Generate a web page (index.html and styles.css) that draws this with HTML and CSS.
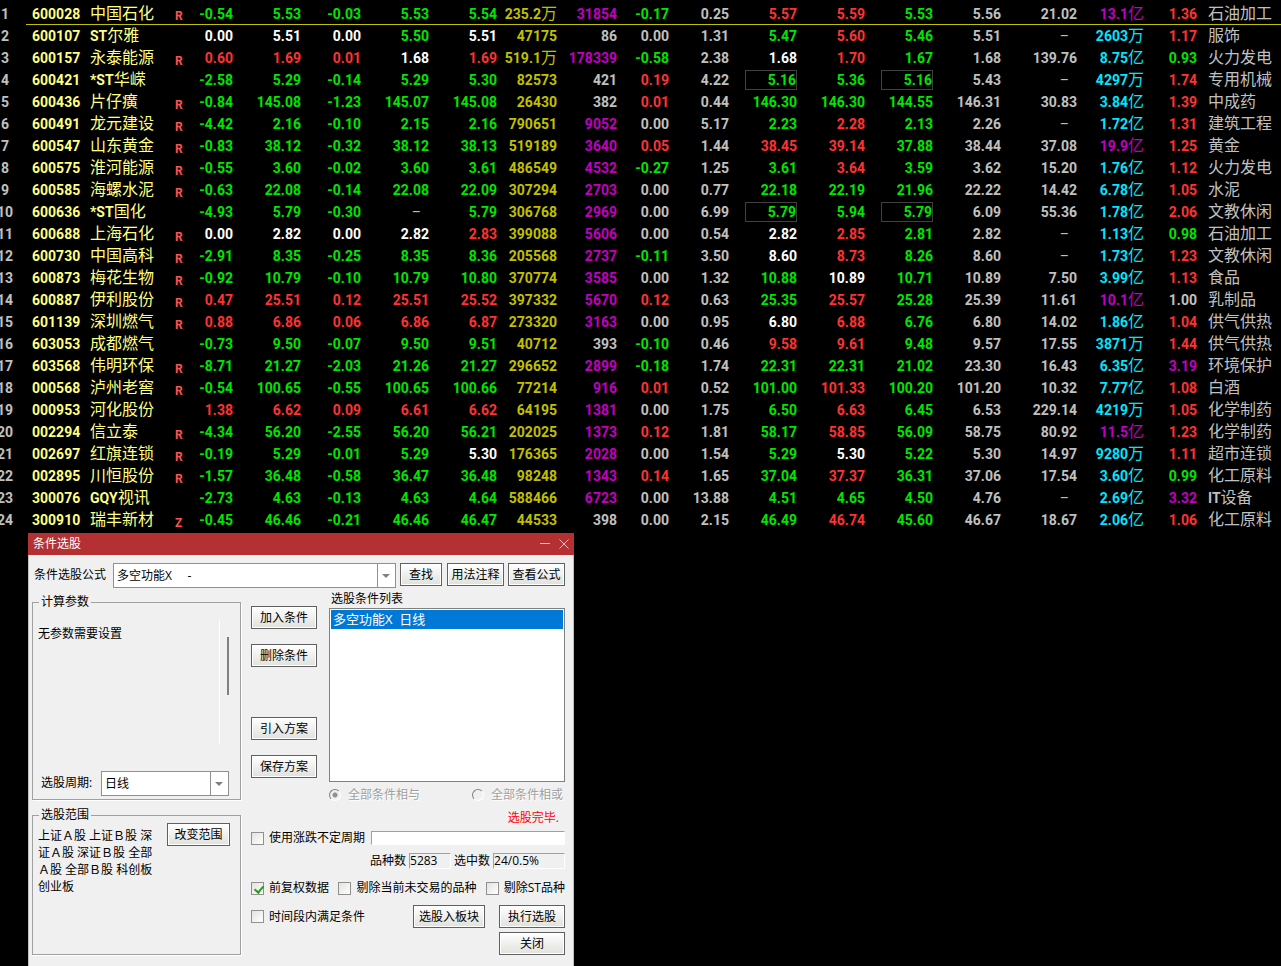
FILE: index.html
```html
<!DOCTYPE html>
<html lang="zh-CN">
<head>
    <meta charset="UTF-8">
    <meta name="viewport" content="width=device-width, initial-scale=1.0">
    <title>条件选股</title>
    <link rel="stylesheet" href="styles.css">
</head>
<body>

<!-- 行情列表 -->
<table class="quotes">
    <colgroup>
        <col class="c-index"><col class="c-code"><col class="c-name"><col class="c-flag">
        <col class="c-pct"><col class="c-price"><col class="c-mid"><col class="c-price"><col class="c-price">
        <col class="c-mid"><col class="c-mid"><col class="c-speed"><col class="c-mid">
        <col class="c-price"><col class="c-price"><col class="c-price"><col class="c-price">
        <col class="c-pe"><col class="c-amount"><col class="c-ratio"><col>
    </colgroup>
    <tbody id="quote-body"></tbody>
</table>

<!-- 条件选股窗口 -->
<div class="dialog">
    <div class="title-bar">
        <span>条件选股</span>
        <div class="title-buttons">
            <button type="button" aria-label="最小化"><svg width="10" height="10" viewBox="0 0 10 10"><path d="M0 4.5H10"/></svg></button>
            <button type="button" aria-label="关闭窗口"><svg width="10" height="10" viewBox="0 0 10 10"><path d="M0.5 0.5L9.5 9.5M9.5 0.5L0.5 9.5"/></svg></button>
        </div>
    </div>

    <form class="dialog-body">
        <div class="formula-row">
            <label for="formula">条件选股公式</label>
            <div class="combo formula-combo">
                <select id="formula"><option>多空功能X &nbsp; &nbsp; -</option></select>
            </div>
            <button type="button" class="btn btn-find">查找</button>
            <button type="button" class="btn btn-usage">用法注释</button>
            <button type="button" class="btn btn-view">查看公式</button>
        </div>

        <div class="main">
            <div class="left">
                <fieldset class="params">
                    <legend>计算参数</legend>
                    <div class="params-pane">
                        <p>无参数需要设置</p>
                        <div class="scroll-thumb"></div>
                    </div>
                    <div class="period-row">
                        <label for="period">选股周期:</label>
                        <div class="combo">
                            <select id="period"><option>日线</option></select>
                        </div>
                    </div>
                </fieldset>

                <fieldset class="range">
                    <legend>选股范围</legend>
                    <div class="range-row">
                        <p>上证Ａ股 上证Ｂ股 深<br>证Ａ股 深证Ｂ股 全部<br>Ａ股 全部Ｂ股 科创板<br>创业板</p>
                        <button type="button" class="btn">改变范围</button>
                    </div>
                </fieldset>
            </div>

            <div class="right">
                <div class="conditions">
                    <div class="condition-buttons">
                        <button type="button" class="btn">加入条件</button>
                        <button type="button" class="btn">删除条件</button>
                        <button type="button" class="btn plan-first">引入方案</button>
                        <button type="button" class="btn">保存方案</button>
                    </div>
                    <div class="condition-list">
                        <div class="list-label" id="list-label">选股条件列表</div>
                        <ul class="listbox" role="listbox" aria-labelledby="list-label">
                            <li role="option" aria-selected="true">多空功能X &nbsp;日线</li>
                        </ul>
                        <div class="logic-row">
                            <label><input type="radio" name="logic" checked disabled>全部条件相与</label>
                            <label><input type="radio" name="logic" disabled>全部条件相或</label>
                        </div>
                    </div>
                </div>

                <div class="status">选股完毕.</div>

                <div class="cycle-row">
                    <label><input type="checkbox">使用涨跌不定周期</label>
                    <input type="text" class="cycle-input" aria-label="不定周期">
                </div>

                <div class="count-row">
                    <label for="total">品种数</label>
                    <input type="text" id="total" class="total" value="5283" readonly>
                    <label for="hits">选中数</label>
                    <input type="text" id="hits" class="hits" value="24/0.5%" readonly>
                </div>

                <div class="check-row">
                    <label><input type="checkbox" checked>前复权数据</label>
                    <label><input type="checkbox">剔除当前未交易的品种</label>
                    <label><input type="checkbox">剔除ST品种</label>
                </div>

                <div class="action-row">
                    <label><input type="checkbox">时间段内满足条件</label>
                    <button type="button" class="btn btn-board">选股入板块</button>
                    <button type="button" class="btn btn-run">执行选股</button>
                </div>
                <div class="close-row">
                    <button type="button" class="btn btn-run">关闭</button>
                </div>
            </div>
        </div>
    </form>
</div>

<script>
    // 代码 名称 标记 涨幅 现价 涨跌 买价 卖价 总量 现量 涨速 换手 今开 最高 最低 昨收 市盈 金额 量比 行业
    const quotes = `
600028 中国石化 R -0.54 5.53 -0.03 5.53 5.54 235.2万 31854 -0.17 0.25 5.57 5.59 5.53 5.56 21.02 13.1亿 1.36 石油加工
600107 ST尔雅 . 0.00 5.51 0.00 5.50 5.51 47175 86 0.00 1.31 5.47 5.60 5.46 5.51 – 2603万 1.17 服饰
600157 永泰能源 R 0.60 1.69 0.01 1.68 1.69 519.1万 178339 -0.58 2.38 1.68 1.70 1.67 1.68 139.76 8.75亿 0.93 火力发电
600421 *ST华嵘 . -2.58 5.29 -0.14 5.29 5.30 82573 421 0.19 4.22 5.16 5.36 5.16 5.43 – 4297万 1.74 专用机械
600436 片仔癀 R -0.84 145.08 -1.23 145.07 145.08 26430 382 0.01 0.44 146.30 146.30 144.55 146.31 30.83 3.84亿 1.39 中成药
600491 龙元建设 R -4.42 2.16 -0.10 2.15 2.16 790651 9052 0.00 5.17 2.23 2.28 2.13 2.26 – 1.72亿 1.31 建筑工程
600547 山东黄金 R -0.83 38.12 -0.32 38.12 38.13 519189 3640 0.05 1.44 38.45 39.14 37.88 38.44 37.08 19.9亿 1.25 黄金
600575 淮河能源 R -0.55 3.60 -0.02 3.60 3.61 486549 4532 -0.27 1.25 3.61 3.64 3.59 3.62 15.20 1.76亿 1.12 火力发电
600585 海螺水泥 R -0.63 22.08 -0.14 22.08 22.09 307294 2703 0.00 0.77 22.18 22.19 21.96 22.22 14.42 6.78亿 1.05 水泥
600636 *ST国化 . -4.93 5.79 -0.30 – 5.79 306768 2969 0.00 6.99 5.79 5.94 5.79 6.09 55.36 1.78亿 2.06 文教休闲
600688 上海石化 R 0.00 2.82 0.00 2.82 2.83 399088 5606 0.00 0.54 2.82 2.85 2.81 2.82 – 1.13亿 0.98 石油加工
600730 中国高科 R -2.91 8.35 -0.25 8.35 8.36 205568 2737 -0.11 3.50 8.60 8.73 8.26 8.60 – 1.73亿 1.23 文教休闲
600873 梅花生物 R -0.92 10.79 -0.10 10.79 10.80 370774 3585 0.00 1.32 10.88 10.89 10.71 10.89 7.50 3.99亿 1.13 食品
600887 伊利股份 R 0.47 25.51 0.12 25.51 25.52 397332 5670 0.12 0.63 25.35 25.57 25.28 25.39 11.61 10.1亿 1.00 乳制品
601139 深圳燃气 R 0.88 6.86 0.06 6.86 6.87 273320 3163 0.00 0.95 6.80 6.88 6.76 6.80 14.02 1.86亿 1.04 供气供热
603053 成都燃气 . -0.73 9.50 -0.07 9.50 9.51 40712 393 -0.10 0.46 9.58 9.61 9.48 9.57 17.55 3871万 1.44 供气供热
603568 伟明环保 R -8.71 21.27 -2.03 21.26 21.27 296652 2899 -0.18 1.74 22.31 22.31 21.02 23.30 16.43 6.35亿 3.19 环境保护
000568 泸州老窖 R -0.54 100.65 -0.55 100.65 100.66 77214 916 0.01 0.52 101.00 101.33 100.20 101.20 10.32 7.77亿 1.08 白酒
000953 河化股份 . 1.38 6.62 0.09 6.61 6.62 64195 1381 0.00 1.75 6.50 6.63 6.45 6.53 229.14 4219万 1.05 化学制药
002294 信立泰 R -4.34 56.20 -2.55 56.20 56.21 202025 1373 0.12 1.81 58.17 58.85 56.09 58.75 80.92 11.5亿 1.23 化学制药
002697 红旗连锁 R -0.19 5.29 -0.01 5.29 5.30 176365 2028 0.00 1.54 5.29 5.30 5.22 5.30 14.97 9280万 1.11 超市连锁
002895 川恒股份 R -1.57 36.48 -0.58 36.47 36.48 98248 1343 0.14 1.65 37.04 37.37 36.31 37.06 17.54 3.60亿 0.99 化工原料
300076 GQY视讯 . -2.73 4.63 -0.13 4.63 4.64 588466 6723 0.00 13.88 4.51 4.65 4.50 4.76 – 2.69亿 3.32 IT设备
300910 瑞丰新材 Z -0.45 46.46 -0.21 46.46 46.47 44533 398 0.00 2.15 46.49 46.74 45.60 46.67 18.67 2.06亿 1.06 化工原料`.trim().split('\n').map(line => line.split(' '));

    const MARK = 2, PRICES = [4, 6, 7, 12, 13, 14], CLOSE = 15;

    // 与基准比较:涨红、跌绿、平用 flat 颜色
    function compare(value, base, flat) {
        if (value > base) return 'up';
        if (value < base) return 'down';
        return flat;
    }

    function cellClass(row, i) {
        const text = row[i];
        const value = parseFloat(text);
        if (i === 0) return 'code';
        if (i === 1) return 'name';
        if (i === MARK) return 'flag';
        if (i === 19) return 'industry';
        if (text === '–') return 'none';
        if (i === 3 || i === 5) return compare(value, 0, 'flat');
        if (PRICES.includes(i)) return compare(value, parseFloat(row[CLOSE]), 'flat');
        if (i === 8) return 'volume';
        if (i === 9) return value >= 500 ? 'big' : '';
        if (i === 10) return compare(value, 0, '');
        if (i === 17) return text.endsWith('亿') && value >= 10 ? 'big' : 'amount';
        if (i === 18) return value > 3 ? 'big' : compare(value, 1, '');
        return '';
    }

    // ST 股开盘价、最高价、最低价触及 5% 跌停时加框
    function isLimit(row, i) {
        return row[1].includes('ST') && i >= 12 && i <= 14 &&
            row[i] === (row[CLOSE] * 0.95).toFixed(2);
    }

    quotes.forEach(function(row, n) {
        const tr = document.createElement('tr');
        let html = '<td class="index">' + (n + 1) + '</td>';
        row.forEach(function(text, i) {
            let content = text === '.' ? '' : text.replace(/[\u4e00-\u9fff]+/g, '<span class="han">$&</span>');
            if (isLimit(row, i)) content = '<span class="limit">' + content + '</span>';
            html += '<td class="' + cellClass(row, i) + '">' + content + '</td>';
        });
        tr.innerHTML = html;
        document.getElementById('quote-body').appendChild(tr);
    });
</script>

</body>
</html>
```
FILE: styles.css
```css
* {
    box-sizing: border-box;
}

body {
    margin: 0;
    padding-top: 3px;
    background-color: #000;
    font-family: "Open Sans", "Noto Sans CJK SC", sans-serif;
    font-size: 12px;
    line-height: 16px;
    color: #000;
    overflow-x: hidden;
}

p {
    margin: 0;
}

/* 行情列表 */
.quotes {
    width: calc(100% + 16px);
    margin-left: -16px;
    border-collapse: separate;
    border-spacing: 0;
    table-layout: fixed;
    font-family: Roboto, "Noto Sans CJK SC", sans-serif;
    font-size: 14px;
    font-weight: bold;
    color: #c0c0c0;
}

.c-index { width: 42px; }
.c-code { width: 64px; }
.c-name { width: 85px; }
.c-flag { width: 15px; }
.c-pct { width: 43px; }
.c-price { width: 68px; }
.c-mid { width: 60px; }
.c-speed { width: 52px; }
.c-pe { width: 76px; }
.c-amount { width: 67px; }
.c-ratio { width: 53px; }

.quotes td {
    height: 22px;
    padding: 0;
    line-height: 20px;
    text-align: right;
    white-space: nowrap;
}

.quotes tr:first-child td:not(.index) {
    border-bottom: 1px solid #c0c000;
}

.quotes .index {
    text-align: center;
}

.quotes .code {
    padding-left: 6px;
    text-align: left;
    color: #ffff80;
}

.quotes .name {
    text-align: left;
    color: #ffff80;
}

.quotes .flag {
    padding-top: 5px;
    font-size: 12px;
    line-height: 16px;
    text-align: left;
    color: #ff5050;
}

.quotes .industry {
    padding-left: 11px;
    text-align: left;
}

.quotes .none {
    padding-right: 8px;
    font-weight: normal;
}

.han {
    font-size: 16px;
    font-weight: normal;
    line-height: 16px;
}

.up { color: #ff3232; }
.down { color: #00e600; }
.flat { color: #fff; }
.volume { color: #c0c000; }
.big { color: #c000c0; }
.amount { color: #00e6ff; }

.limit {
    display: block;
    height: 20px;
    margin-left: 16px;
    border: 1px solid #404040;
    line-height: 18px;
}

/* 条件选股窗口 */
.dialog {
    width: 546px;
    margin: 2px 0 0 28px;
    background-color: #f0f0f0;
}

.title-bar {
    display: flex;
    justify-content: space-between;
    height: 22px;
    padding: 0 5px;
    background-color: #b43032;
    line-height: 21px;
    color: #fff;
}

.title-buttons {
    display: flex;
    align-items: center;
    gap: 9px;
}

.title-buttons button {
    width: 10px;
    height: 14px;
    padding: 0;
    border: none;
    background: none;
}

.title-buttons svg {
    display: block;
    stroke: #e8c0c0;
    fill: none;
}

.dialog-body {
    padding: 8px 8px 11px 3px;
    border: solid #c0c0c0;
    border-width: 0 1px;
}

.btn {
    height: 23px;
    padding: 0;
    border: 1px solid #606060;
    background: linear-gradient(#fff, #e0e0dc);
    box-shadow: inset 0 0 0 1px #fff;
    font: inherit;
    line-height: 20px;
    color: #000;
}

.combo {
    position: relative;
    flex: 1;
}

.combo select {
    display: block;
    width: 100%;
    height: 25px;
    padding: 0 20px 0 3px;
    border: 1px solid #909090;
    border-radius: 0;
    background-color: #fff;
    font: inherit;
    color: #000;
    appearance: none;
}

/* 下拉箭头 */
.combo::before {
    content: "";
    position: absolute;
    top: 0;
    right: 18px;
    width: 1px;
    height: 25px;
    background-color: #909090;
}

.combo::after {
    content: "";
    position: absolute;
    top: 11px;
    right: 6px;
    border: solid transparent;
    border-width: 4px 4px 0;
    border-top-color: #808080;
    pointer-events: none;
}

.formula-row {
    display: flex;
    gap: 4px;
}

.formula-row label {
    width: 77px;
    padding-left: 2px;
    line-height: 24px;
}

.btn-find { width: 42px; margin-right: 1px; }
.btn-usage { width: 57px; }
.btn-view { width: 57px; }

.main {
    display: flex;
    gap: 10px;
    margin-top: 2px;
}

.left {
    display: flex;
    flex: none;
    flex-direction: column;
    width: 209px;
    gap: 7px;
    padding-top: 4px;
}

fieldset {
    min-width: 0;
    margin: 0;
    padding: 0;
    border: 1px solid #a0a0a0;
    box-shadow: 1px 1px #fff;
}

legend {
    margin-left: 6px;
    padding: 0 2px;
}

.params {
    padding-bottom: 3px;
}

.params-pane {
    position: relative;
    height: 124px;
    margin: 10px 20px 0 5px;
    padding-top: 6px;
    border-right: 1px solid #fff;
}

.scroll-thumb {
    position: absolute;
    top: 17px;
    right: -10px;
    width: 2px;
    height: 58px;
    background-color: #808080;
}

.period-row {
    display: flex;
    gap: 4px;
    margin-top: 27px;
    padding: 0 11px 0 5px;
}

.period-row label {
    width: 59px;
    padding-left: 3px;
    line-height: 24px;
}

.range {
    flex: 1;
}

.range-row {
    display: flex;
    justify-content: space-between;
    align-items: flex-start;
    padding: 0 10px 0 5px;
}

.range-row p {
    padding-top: 4px;
    line-height: 17px;
    white-space: nowrap;
}

.range-row .btn {
    width: 63px;
}

.right {
    flex: 1;
    min-width: 0;
}

.conditions {
    display: flex;
    gap: 12px;
}

.condition-buttons {
    display: flex;
    flex-direction: column;
    width: 66px;
    gap: 15px;
    padding-top: 16px;
}

.plan-first {
    margin-top: 35px;
}

.condition-list {
    flex: 1;
}

.list-label {
    padding-left: 2px;
    line-height: 18px;
}

.listbox {
    height: 174px;
    margin: 0;
    padding: 1px;
    border: 1px solid #808080;
    background-color: #fff;
    list-style: none;
}

.listbox li {
    padding-left: 2px;
    background-color: #0078d7;
    font-size: 13px;
    line-height: 19px;
    color: #fff;
}

.logic-row {
    display: flex;
    justify-content: space-between;
    margin-top: 5px;
    padding-right: 2px;
    color: #a0a0a0;
    text-shadow: 1px 1px #fff;
}

.right label {
    display: flex;
    align-items: center;
    white-space: nowrap;
}

input[type="radio"] {
    width: 12px;
    height: 12px;
    margin: 0 7px 0 0;
    border: 1px solid #808080;
    border-right-color: #fff;
    border-bottom-color: #fff;
    border-radius: 50%;
    appearance: none;
}

input[type="radio"]:checked {
    background: radial-gradient(circle, #909090 2px, transparent 3px);
}

input[type="checkbox"] {
    width: 13px;
    height: 13px;
    margin: 0 5px 0 0;
    border: 1px solid #909090;
    background: linear-gradient(135deg, #e4e2dc, #fff);
    appearance: none;
}

input[type="checkbox"]:checked::before {
    content: "";
    display: block;
    width: 4px;
    height: 7px;
    margin: 1px 0 0 4px;
    border: solid #20a020;
    border-width: 0 2px 2px 0;
    transform: rotate(40deg);
}

input[type="text"] {
    padding: 0;
    border: 1px solid #a0a0a0;
    border-right-color: #fff;
    border-bottom-color: #fff;
    border-radius: 0;
    font: inherit;
    color: #000;
}

.status {
    margin-top: 7px;
    padding-right: 6px;
    text-align: right;
    color: #f00;
}

.cycle-row {
    display: flex;
    align-items: center;
    gap: 6px;
    margin-top: 4px;
}

.cycle-input {
    flex: 1;
    min-width: 0;
    height: 14px;
    background-color: #fff;
}

.count-row {
    display: flex;
    gap: 3px;
    margin-top: 7px;
    padding-left: 119px;
}

.count-row input {
    height: 16px;
    background-color: #f0f0f0;
}

.total {
    width: 42px;
}

.hits {
    flex: 1;
    min-width: 0;
}

.check-row {
    display: flex;
    justify-content: space-between;
    margin-top: 11px;
}

.action-row {
    display: flex;
    gap: 14px;
    margin-top: 9px;
}

.action-row label {
    flex: 1;
}

.btn-board { width: 72px; }
.btn-run { width: 66px; }

.close-row {
    display: flex;
    justify-content: flex-end;
    margin-top: 4px;
}
```
